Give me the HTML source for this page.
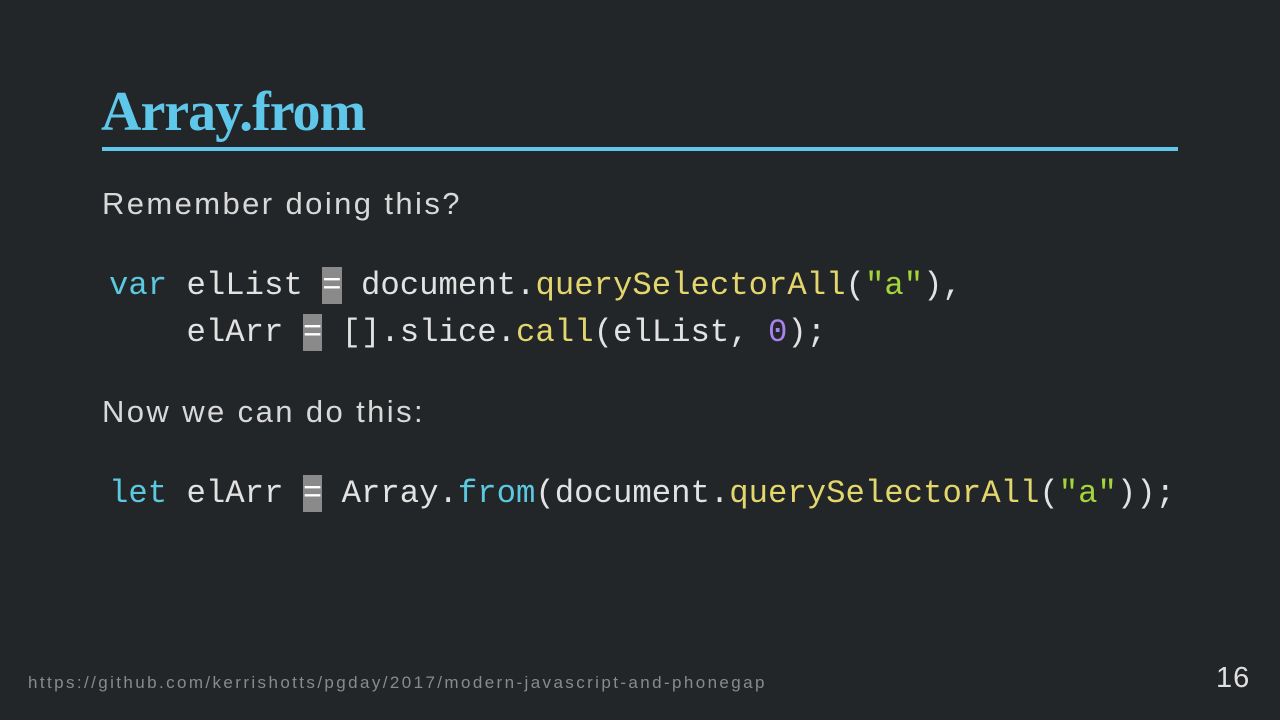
<!DOCTYPE html>
<html><head><style>
body{margin:0;width:1280px;height:720px;background:#232628;position:relative;overflow:hidden;font-family:"Liberation Sans",sans-serif;}
.t{position:absolute;left:101px;top:74px;font-family:"Liberation Serif",serif;font-size:56px;font-weight:bold;color:#5fc8ea;letter-spacing:-1px;line-height:76px;}
.ul{position:absolute;left:102px;top:147px;width:1076px;height:4px;background:#5fc8ea;}
.p{position:absolute;left:102px;font-size:31px;color:#d8d8d8;letter-spacing:2.4px;}
.c{position:absolute;left:109px;font-family:"Liberation Mono",monospace;font-size:32.3px;color:#e2e2e2;white-space:pre;line-height:47px;}
.k{color:#5bc8e0}.f{color:#e3d66c}.s{color:#a4d63a}.n{color:#a883f0}
.eq{background:#8a8a8a;color:#fff}
.foot{position:absolute;left:28px;top:673px;font-size:17px;color:#8a8a8a;letter-spacing:2.4px;}
.num{position:absolute;left:1216px;top:662px;font-size:29px;color:#e0e0e0;letter-spacing:1px;}
</style></head><body>
<div class="t">Array.from</div>
<div class="ul"></div>
<div class="p" style="top:186px">Remember doing this?</div>
<div class="c" style="top:262px"><span class="k">var</span> elList <span class="eq">=</span> document.<span class="f">querySelectorAll</span>(<span class="s">"a"</span>),
    elArr <span class="eq">=</span> [].slice.<span class="f">call</span>(elList, <span class="n">0</span>);</div>
<div class="p" style="top:394px">Now we can do this:</div>
<div class="c" style="top:470px"><span class="k">let</span> elArr <span class="eq">=</span> Array.<span class="k">from</span>(document.<span class="f">querySelectorAll</span>(<span class="s">"a"</span>));</div>
<div class="foot">https://github.com/kerrishotts/pgday/2017/modern-javascript-and-phonegap</div>
<div class="num">16</div>
</body></html>
